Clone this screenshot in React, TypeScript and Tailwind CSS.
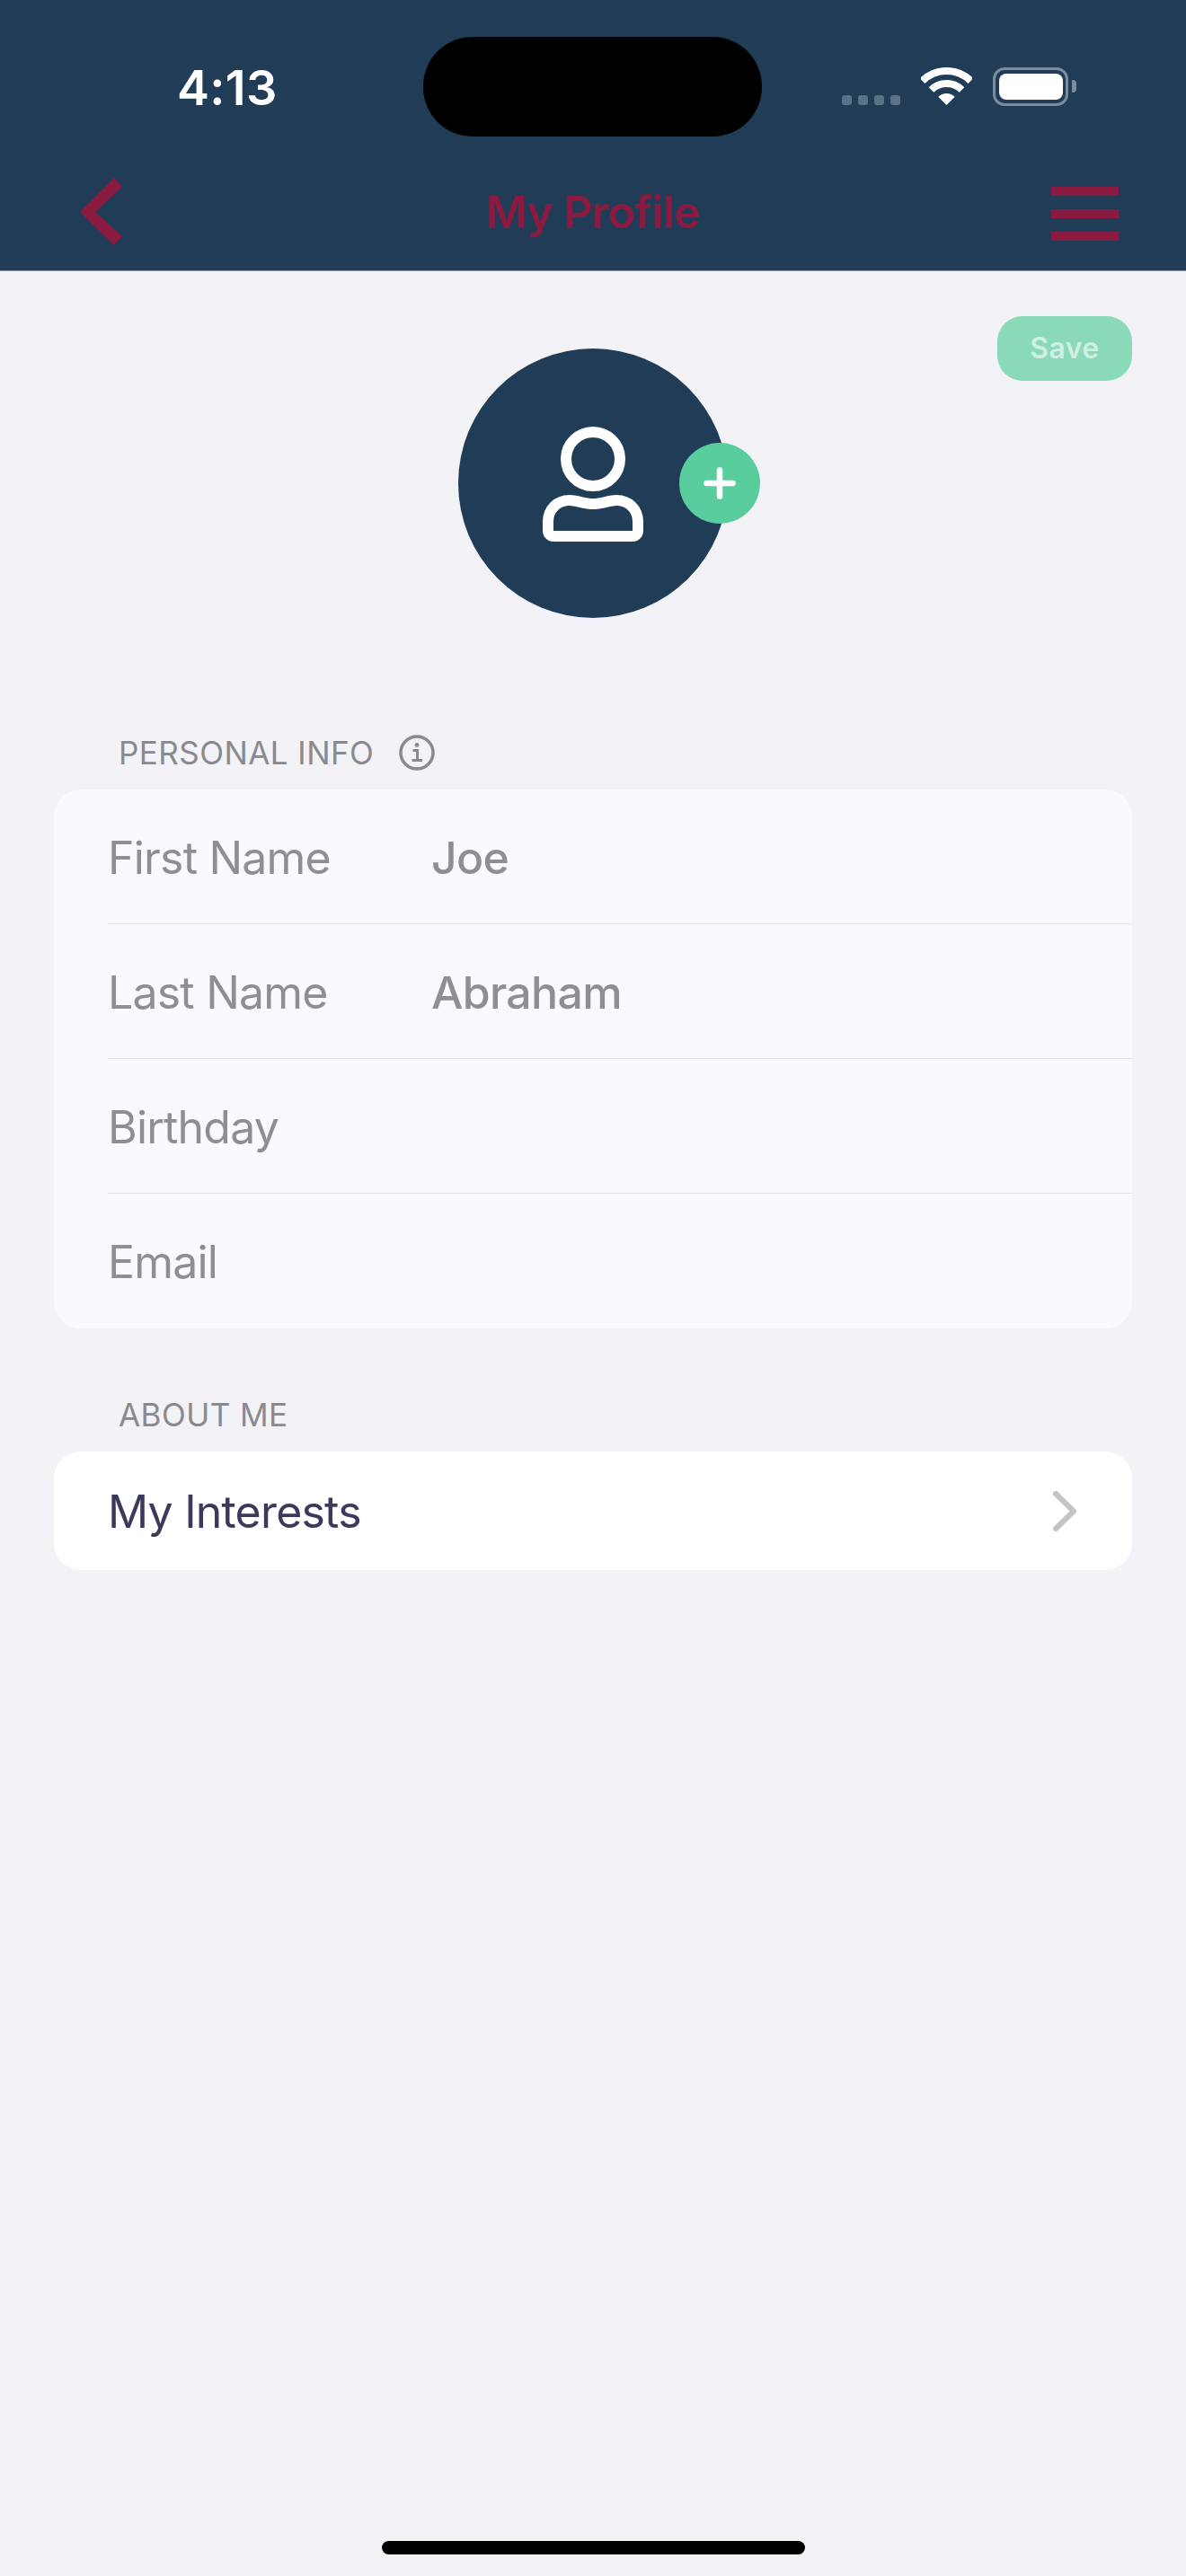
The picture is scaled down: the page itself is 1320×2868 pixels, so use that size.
import React from 'react';

const fontStack = "font-['Inter','Liberation_Sans',sans-serif]";

const rows = [
  { label: 'First Name', value: 'Joe' },
  { label: 'Last Name', value: 'Abraham' },
  { label: 'Birthday', value: '' },
  { label: 'Email', value: '' },
];

const WifiIcon = () => (
  <svg width="57" height="42" viewBox="0 0 57 42" fill="none">
    <path d="M1.6 15.1A38 38 0 0 1 55.4 15.1" stroke="#fff" strokeWidth="8" />
    <path d="M11.5 25A24 24 0 0 1 45.5 25" stroke="#fff" strokeWidth="8" />
    <path d="M28.5 42L19.3 32.8A13 13 0 0 1 37.7 32.8Z" fill="#fff" />
  </svg>
);

const PersonIcon = () => (
  <svg width="112" height="128" viewBox="0 0 112 128" fill="none" stroke="#fff" strokeWidth="12">
    <circle cx="56" cy="36" r="30" />
    <path d="M6 106C6 92 16 82 30 82C38 82 46 86 56 86C66 86 74 82 82 82C96 82 106 92 106 106V116A6 6 0 0 1 100 122H12A6 6 0 0 1 6 116Z" strokeLinejoin="round" />
  </svg>
);

const InfoIcon = () => (
  <svg width="40" height="40" viewBox="0 0 40 40" fill="none" stroke="#8a8a8e">
    <circle cx="20" cy="20" r="18" strokeWidth="3.5" />
    <circle cx="20" cy="11.5" r="2.4" fill="#8a8a8e" stroke="none" />
    <path d="M15.5 17.5H20.5V28.5M14.5 28.5H26" strokeWidth="3" />
  </svg>
);

const SectionLabel = ({ children }: { children: React.ReactNode }) => (
  <div className="mb-[21px] flex h-10 items-center pl-[72px]">{children}</div>
);

export default function App() {
  return (
    <div className={`flex h-[2868px] w-[1320px] flex-col overflow-hidden bg-[#f2f2f7] ${fontStack}`}>
      {/* Header */}
      <header className="h-[302px] shrink-0 border-b border-[#8f9aa5] bg-[#213c56] pt-[41px]">
        <div className="flex h-[111px] items-center pl-[197px]">
          <span className="w-[274px] pt-[2px] text-[54px] leading-none font-semibold tracking-[0.3px] text-white">4:13</span>
          <div className="h-[111px] w-[377px] rounded-[55px] bg-black" />
          <div className="ml-[89px] flex items-end">
            <div className="flex gap-[7px] pb-[1px]">
              <span className="h-[11px] w-[11px] rounded-[3px] bg-[#5b7185]" />
              <span className="h-[11px] w-[11px] rounded-[3px] bg-[#5b7185]" />
              <span className="h-[11px] w-[11px] rounded-[3px] bg-[#5b7185]" />
              <span className="h-[11px] w-[11px] rounded-[3px] bg-[#5b7185]" />
            </div>
            <div className="ml-[23px] pb-[1px]">
              <WifiIcon />
            </div>
            <div className="ml-[23px] flex h-[43px] w-[84px] items-center justify-center rounded-[13px] border-[3.5px] border-[#7c8c9c]">
              <div className="h-[29px] w-[71px] rounded-[8px] bg-white" />
            </div>
            <div className="mb-[15px] ml-[4px] h-[14px] w-[5px] rounded-r-[4px] bg-[#7c8c9c]" />
          </div>
        </div>
        <div className="mt-[33px] flex h-[100px] items-center px-[75px]">
          <div className="w-[75px] pl-[14px]">
            <svg width="47" height="75" viewBox="0 0 47 75" className="block">
              <polygon points="38,0 47,10 17,38 47,65 38,75 0,38" fill="#8a1a3f" />
            </svg>
          </div>
          <h1 className="flex-1 pt-[2px] text-center text-[50px] leading-none font-semibold tracking-[-0.7px] text-[#8a1a3f]">My Profile</h1>
          <div className="mt-[6px] flex w-[75px] flex-col gap-[15px]">
            <span className="h-[10px] bg-[#8a1a3f]" />
            <span className="h-[10px] bg-[#8a1a3f]" />
            <span className="h-[10px] bg-[#8a1a3f]" />
          </div>
        </div>
      </header>

      {/* Content */}
      <main className="flex-1 px-[60px] pt-[50px]">
        <div className="grid grid-cols-[1fr_300px_1fr] items-start">
          <div />
          <div className="relative mt-[36px] flex h-[300px] w-[300px] items-start justify-center rounded-full bg-[#213c56] pt-[87px]">
            <PersonIcon />
            <div className="absolute top-[105px] left-[246px] flex h-[90px] w-[90px] items-center justify-center rounded-full bg-[#5acd9f]">
              <svg width="36" height="36" viewBox="0 0 36 36" stroke="#fff" strokeWidth="6.5" strokeLinecap="round">
                <path d="M18 3.5V32.5M3.5 18H32.5" />
              </svg>
            </div>
          </div>
          <button className="flex h-[72px] w-[150px] items-center justify-center justify-self-end rounded-[28px] bg-[#8ad9b9] text-[32px] font-semibold tracking-[0.4px] text-white/60">
            Save
          </button>
        </div>

        <div className="mt-[130px]">
          <SectionLabel>
            <span className="text-[35px] leading-none tracking-[0.45px] text-[#8a8a8e]">PERSONAL INFO</span>
            <span className="ml-[28px]">
              <InfoIcon />
            </span>
          </SectionLabel>
          <div className="rounded-[30px] bg-[#f9f9fe]">
            {rows.map((row, i) => (
              <div key={row.label} className="flex h-[150px] pl-[60px]">
                <div className={`flex flex-1 items-center pt-[2px] ${i < rows.length - 1 ? 'border-b border-[#e2e2e8]' : ''}`}>
                  <span className="w-[360px] text-[50px] leading-none tracking-[-0.8px] text-[#8e8e93]">{row.label}</span>
                  <span className="text-[50px] leading-none font-medium tracking-[-0.7px] text-[#8e8e93]">{row.value}</span>
                </div>
              </div>
            ))}
          </div>
        </div>

        <div className="mt-[76px]">
          <SectionLabel>
            <span className="text-[35px] leading-none tracking-[0.45px] text-[#8a8a8e]">ABOUT ME</span>
          </SectionLabel>
          <div className="flex h-[132px] items-center justify-between rounded-[30px] bg-white pr-[62px] pl-[60px]">
            <span className="pt-[2px] text-[50px] leading-none tracking-[-0.8px] text-[#3b3a5c]">My Interests</span>
            <svg width="26" height="45" viewBox="0 0 26 45" fill="none" stroke="#c4c4c6" strokeWidth="6" strokeLinecap="round" strokeLinejoin="round">
              <path d="M3 3L23 22.5L3 42" />
            </svg>
          </div>
        </div>
      </main>

      {/* Home indicator */}
      <div className="mx-auto mb-[24px] h-[15px] w-[471px] shrink-0 rounded-[8px] bg-black" />
    </div>
  );
}
